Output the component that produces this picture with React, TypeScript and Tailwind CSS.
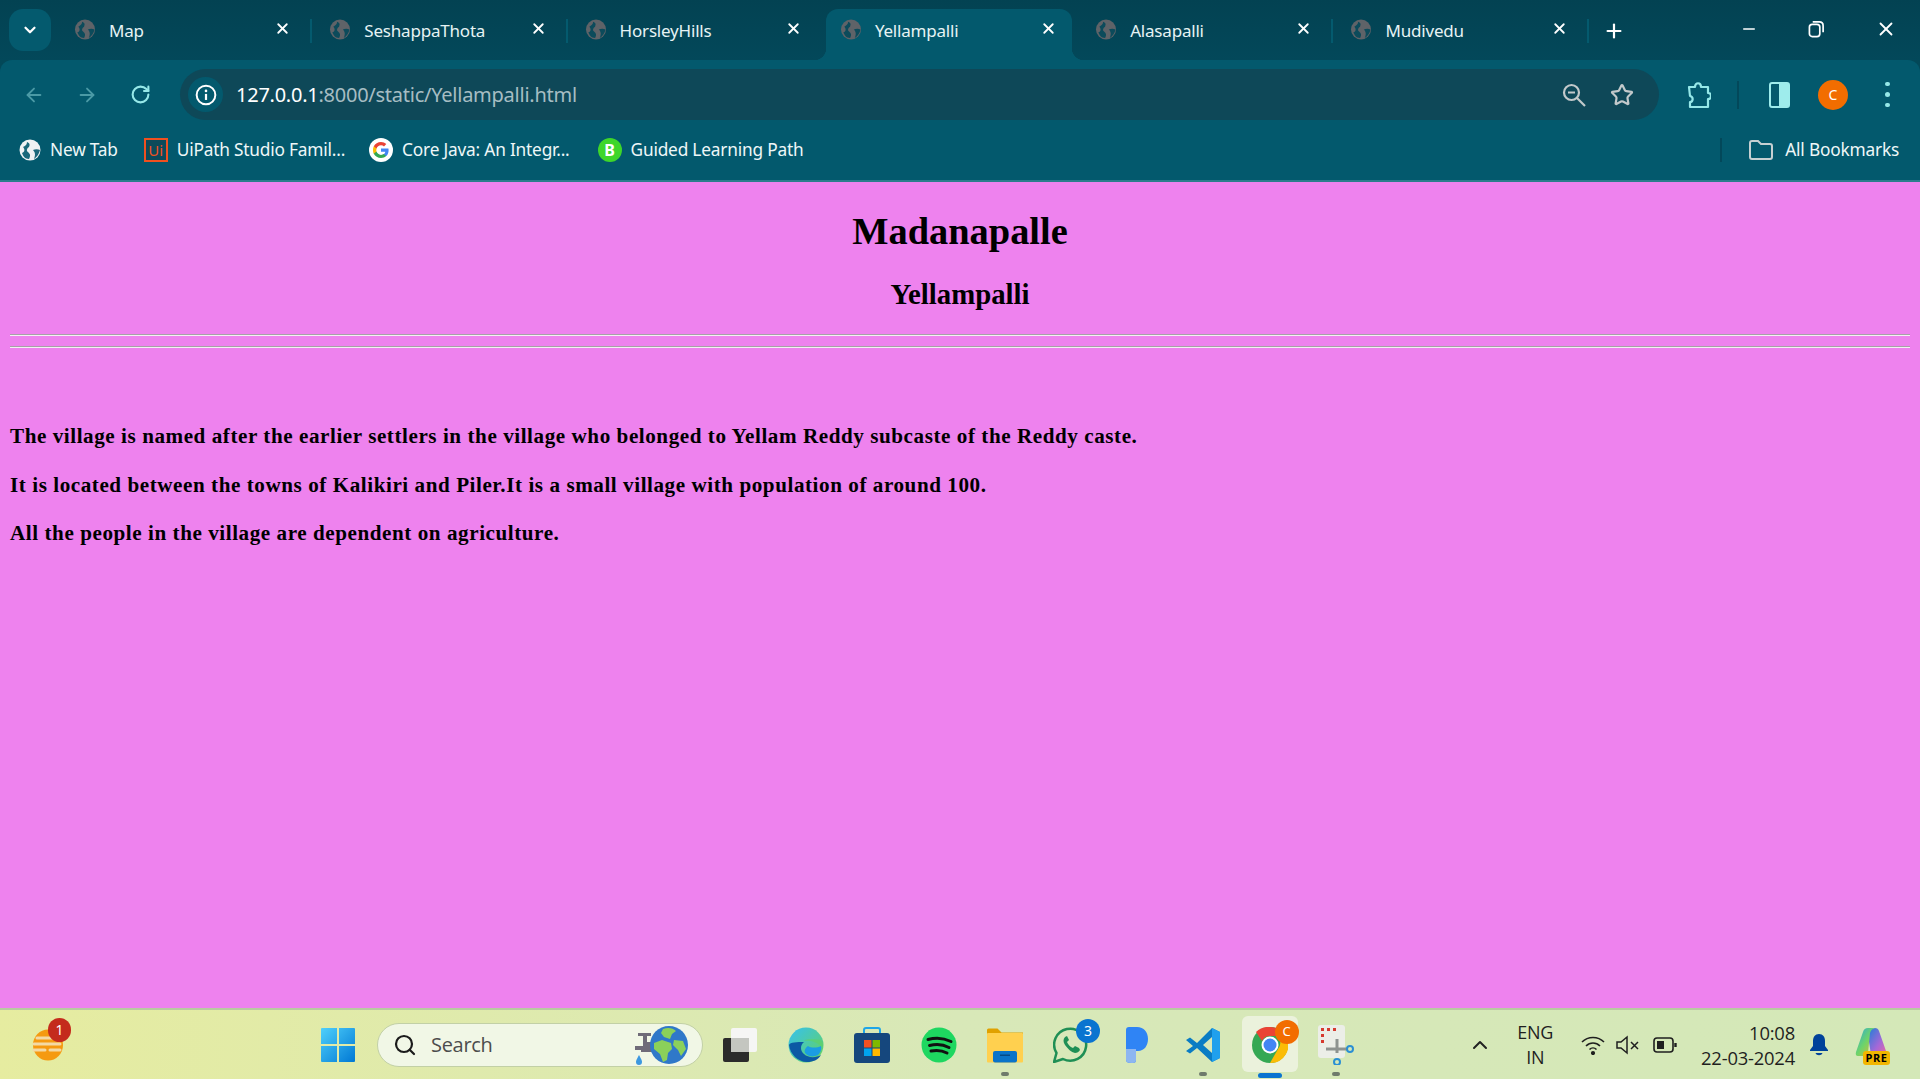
import React from 'react';
import { ChevronDown, X, Plus, ArrowLeft, ArrowRight, RotateCw, Minus, ChevronUp, Star, Search } from 'lucide-react';

const tabs = ['Map', 'SeshappaThota', 'HorsleyHills', 'Yellampalli', 'Alasapalli', 'Mudivedu'];

const Globe: React.FC<{ className?: string; fill?: string; cut?: string }> = ({ className = 'w-[22px] h-[21px]', fill = '#5f6368', cut = '#03485a' }) => (
  <svg viewBox="0 0 22 22" className={`shrink-0 ${className}`}>
    <circle cx="11" cy="11" r="10.5" fill={fill} />
    <path d="M3 14c3-1 3-4 1-6 2-1 4-2 4-5 3 1 3 3 2 5-2 1-3 4-1 5 2 2 3 3 1 7-4 0-6-3-7-6z" fill={cut} opacity="0.9" />
    <path d="M14 11c2-1 5-1 7 0-1 4-3 7-6 9 1-3 2-6-1-9z" fill={cut} opacity="0.9" />
  </svg>
);

const Tab: React.FC<{ title: string; active: boolean; hideSep: boolean }> = ({ title, active, hideSep }) => (
  <div className={`relative h-[51px] shrink-0 flex items-start pt-[10px] pl-[14px] rounded-t-[12px] ${active ? 'w-[246px] mr-[9.3px] pr-[15px] bg-[#03596d]' : 'w-[255.3px] pr-[24px]'}`}>
    <Globe />
    <span className="ml-[13px] flex-1 text-[17px] leading-[24px] text-[#e6f3f4] tracking-[-0.2px]">{title}</span>
    <X className="w-[17px] h-[17px] mt-[1px] text-white" strokeWidth={2.6} />
    {!active && !hideSep && <div className="absolute right-[3px] top-[10px] w-[2px] h-[24px] bg-[#045a6e]" />}
    {active && (
      <>
        <div className="absolute bottom-0 left-[-12px] w-[12px] h-[12px] bg-[radial-gradient(circle_at_0_0,transparent_12px,#03596d_12.5px)]" />
        <div className="absolute bottom-0 right-[-12px] w-[12px] h-[12px] bg-[radial-gradient(circle_at_100%_0,transparent_12px,#03596d_12.5px)]" />
      </>
    )}
  </div>
);

const BookmarkItem: React.FC<{ icon: React.ReactNode; label: string; className?: string }> = ({ icon, label, className = '' }) => (
  <div className={`flex items-center ${className}`}>
    {icon}
    <span className="ml-[9px] text-[17.3px] text-[#eef7f8] tracking-[-0.2px]">{label}</span>
  </div>
);

const GoogleG = () => (
  <svg viewBox="0 0 24 24" className="w-[24px] h-[24px]">
    <circle cx="12" cy="12" r="12" fill="#fff" />
    <path d="M19.6 12.2c0-.6-.1-1.1-.2-1.6H12v3.1h4.3c-.2 1-.8 1.9-1.6 2.4v2h2.6c1.5-1.4 2.3-3.4 2.3-5.900z" fill="#4285F4" />
    <path d="M12 20c2.2 0 4-.7 5.3-1.9l-2.600-2c-.7.5-1.600.8-2.700.8-2.100 0-3.900-1.400-4.500-3.300H4.800v2.100C6.100 18.200 8.800 20 12 20z" fill="#34A853" />
    <path d="M7.500 13.600c-.3-1-.3-2.100 0-3.200V8.300H4.800c-1.100 2.200-1.100 5.100 0 7.400z" fill="#FBBC05" />
    <path d="M12 7.200c1.200 0 2.200.4 3 1.200l2.300-2.300C15.900 4.800 14.100 4 12 4 8.800 4 6.100 5.800 4.800 8.300l2.700 2.100c.6-1.900 2.400-3.200 4.500-3.200z" fill="#EA4335" />
  </svg>
);

const Slot: React.FC<{ children: React.ReactNode; dot?: boolean }> = ({ children, dot }) => (
  <div className="relative w-[66.2px] h-[69px] shrink-0 flex items-center justify-center">
    {children}
    {dot && <div className="absolute bottom-[3px] left-1/2 -translate-x-1/2 w-[8px] h-[4px] rounded-full bg-[#6f7a6c]" />}
  </div>
);

const TaskView = () => (
  <svg viewBox="0 0 36 36" className="w-[36px] h-[36px]">
    <rect x="1" y="11" width="26" height="24" rx="2" fill="#2b2b2b" />
    <rect x="9" y="1" width="26" height="24" rx="2" fill="#f6f6f4" />
    <rect x="9" y="11" width="18" height="14" fill="#c4c6c0" />
  </svg>
);

const Edge = () => (
  <svg viewBox="0 0 36 36" className="w-[36px] h-[36px]">
    <defs>
      <linearGradient id="eg1" x1="0" y1="0" x2="1" y2="1"><stop offset="0" stopColor="#35c1f1" /><stop offset="1" stopColor="#66d35a" /></linearGradient>
    </defs>
    <circle cx="18" cy="18" r="17.500" fill="url(#eg1)" />
    <path d="M1 18C2 27 10 35 19 35c6 0 11-2 14-7-5 3-13 3-17-1-4-3-4-9 0-12-7 0-14 0-15 3z" fill="#0c59a4" />
    <path d="M20 19c3 2 9 2 13 0 1 4-1 7-3 9-4 2-9 2-12-1-2-2-2-5 2-8z" fill="#1b9de2" />
    <path d="M16 14c5-1 12 0 18 6 1 0 1-1 1-2 0-2-1-4-2-5-4 0-13-2-17 1z" fill="#5fd06a" opacity="0.7" />
  </svg>
);

const Store = () => (
  <svg viewBox="0 0 36 36" className="w-[36px] h-[36px]">
    <path d="M10 7V3q0-2 2-2h12q2 0 2 2v4" fill="none" stroke="#1ea6e8" strokeWidth="2" />
    <rect x="0" y="6" width="36" height="30" rx="3" fill="#15477d" />
    <rect x="10" y="13" width="7.500" height="7.500" fill="#f25022" />
    <rect x="18.500" y="13" width="7.500" height="7.500" fill="#7fba00" />
    <rect x="10" y="21.500" width="7.500" height="7.500" fill="#00a4ef" />
    <rect x="18.500" y="21.500" width="7.500" height="7.500" fill="#ffb900" />
  </svg>
);

const Spotify = () => (
  <svg viewBox="0 0 36 36" className="w-[36px] h-[36px]">
    <circle cx="18" cy="18" r="17.500" fill="#1ed760" />
    <path d="M7 12.500c7-2 16-1.500 23 2M8.500 18.500c6-1.500 14-1 19.500 2M10 24c5-1 11-.7 16 2" fill="none" stroke="#111" strokeWidth="3" strokeLinecap="round" />
  </svg>
);

const Folder = () => (
  <svg viewBox="0 0 36 36" className="w-[36px] h-[36px]">
    <path d="M0 3q0-1.500 1.500-1.500h9l4 4H36V12H0z" fill="#e0a100" />
    <rect x="0" y="6" width="36" height="29.500" rx="1" fill="#ffd04f" />
    <rect x="6" y="24" width="24" height="11.500" rx="2" fill="#0a74c9" />
    <rect x="13" y="27.500" width="10" height="1.500" fill="#064a86" />
  </svg>
);

const WhatsApp = () => (
  <svg viewBox="0 0 36 36" className="w-[36px] h-[36px]">
    <path d="M1 35l2.500-9A16 16 0 1 1 10 32z" fill="#d9e8b9" stroke="#1f8f55" strokeWidth="2.500" strokeLinejoin="round" />
    <path d="M12 10c-2 2-2 5 0 8 3 4 6 7 10 8 2 0 4-1 5-3l-1-2-4-2-2 2c-3-1-5-4-6-6l2-2-2-4z" fill="#1f8f55" />
  </svg>
);

const Pandora = () => (
  <svg viewBox="0 0 22 36" className="w-[22px] h-[36px]">
    <path d="M0 3q0-3 3-3h8c7 0 11 5 11 12s-4 12-10 12h-2v9q0 3-3 3H5q-5 0-5-3z" fill="#2f84f5" />
    <path d="M0 22h10v11q0 3-3 3H5q-5 0-5-3z" fill="#8db6f0" />
  </svg>
);

const VSCode = () => (
  <svg viewBox="0 0 36 36" className="w-[36px] h-[36px]">
    <path d="M27 1l8 4v26l-8 4-15-14-7 5.500-4-2.500 7-5-7-6 4-2.500 7 5.500z" fill="#0a7cc4" />
    <path d="M27 1l8 4v26l-8 4z" fill="#1fa0ed" />
    <path d="M27 10v16l-9-8z" fill="#d9e8b9" />
  </svg>
);

const Chrome = () => (
  <svg viewBox="0 0 36 36" className="w-[36px] h-[36px]">
    <circle cx="18" cy="18" r="18" fill="#34a853" />
    <path d="M18 0a18 18 0 0 1 16 9H18a9 9 0 0 0-8 5L4 5A18 18 0 0 1 18 0z" fill="#ea4335" />
    <path d="M34 9a18 18 0 0 1-16 27l8-14a9 9 0 0 0-1-13z" fill="#fbbc05" />
    <circle cx="18" cy="18" r="8.500" fill="#fff" />
    <circle cx="18" cy="18" r="6.500" fill="#4285f4" />
  </svg>
);

const Snip = () => (
  <svg viewBox="0 0 36 40" className="w-[36px] h-[40px]">
    <rect x="0" y="0" width="27" height="33" rx="3" fill="#eceee8" />
    <path d="M3 3h3v3H3zM9 3h3v3H9zM15 3h3v3h-3zM3 9h3v3H3zM3 15h3v3H3z" fill="#d63a2f" />
    <path d="M8 24h22M19 14v14" stroke="#8e9390" strokeWidth="3" />
    <circle cx="32" cy="24" r="3" fill="none" stroke="#2a8fd4" strokeWidth="2" />
    <circle cx="19" cy="37" r="3" fill="none" stroke="#2a8fd4" strokeWidth="2" />
  </svg>
);

const WinLogo = () => (
  <svg viewBox="0 0 36 36" className="w-[36px] h-[36px] shrink-0">
    <defs>
      <linearGradient id="w1" x1="0" y1="0" x2="1" y2="1"><stop offset="0" stopColor="#4fd0fb" /><stop offset="1" stopColor="#0078d4" /></linearGradient>
    </defs>
    <path d="M1 2q0-1 1-1h15v16H1zM19 1h15q1 0 1 1v15H19zM1 19h16v16H2q-1 0-1-1zM19 19h16v15q0 1-1 1H19z" fill="url(#w1)" />
  </svg>
);

const Weather = () => (
  <div className="relative w-[32px] h-[32px] shrink-0">
    <svg viewBox="0 0 32 32" className="w-[32px] h-[32px]">
      <ellipse cx="17" cy="16" rx="15" ry="15.500" fill="#f59a10" />
      <path d="M6 9h18M3 15h26M3 21h11M19 21h10" stroke="#f3d9a4" strokeWidth="3" strokeLinecap="round" />
    </svg>
    <span className="absolute -top-[11px] right-[-8px] w-[23px] h-[24px] rounded-full bg-[#c42b1c] text-white text-[14px] leading-[24px] text-center font-['Noto_Sans',sans-serif]">1</span>
  </div>
);

const TapGlobe = () => (
  <svg viewBox="0 0 56 42" className="w-[56px] h-[42px] shrink-0">
    <path d="M2 22h8V12H5V9h13v3h-4v6h6v10H8v-2H2z" fill="#6f6b78" />
    <path d="M6 31c-2 4-3 5-3 7a3 3 0 0 0 6 0c0-2-1-3-3-7z" fill="#3d98e0" />
    <circle cx="36" cy="21" r="19" fill="#2f78c9" />
    <path d="M30 5c5-2 10-1 13 2l-4 3-2 5-6-2-3-4zM21 19l8-3 9 3 1 6-4 4-1 7-4 2-3-8-6-5zM41 16l9 1 3 8-5 7-3-6-5-5z" fill="#8bd05a" />
  </svg>
);

const ProfileC = ({ className = '' }: { className?: string }) => (
  <div className={`rounded-full bg-[#f26d00] text-white flex items-center justify-center font-['Noto_Sans',sans-serif] ${className}`}>C</div>
);

export default function App() {
  return (
    <div className="w-full h-[1079px] flex flex-col overflow-hidden font-['Noto_Sans',sans-serif] bg-[#034858]">
      {/* tab strip */}
      <div className="h-[60px] shrink-0 bg-gradient-to-b from-[#034252] to-[#03485a] flex items-start pt-[9px]">
        <div className="ml-[9px] w-[42px] h-[42px] rounded-[14px] bg-[#045a6e] flex items-center justify-center shrink-0">
          <ChevronDown className="w-[18px] h-[18px] text-white" strokeWidth={3} />
        </div>
        <div className="ml-[9px] flex">
          {tabs.map((t, i) => (
            <Tab key={t} title={t} active={i === 3} hideSep={i === 2} />
          ))}
        </div>
        <Plus className="ml-[11px] mt-[11px] w-[22px] h-[22px] text-white shrink-0" strokeWidth={2.4} />
        <div className="ml-auto flex items-center mt-[9px] shrink-0">
          <Minus className="w-[18px] h-[18px] text-white" strokeWidth={2} />
          <svg viewBox="0 0 18 18" className="ml-[50px] w-[17px] h-[18px]" fill="none" stroke="#fff" strokeWidth="1.800">
            <rect x="1.500" y="4" width="11" height="13" rx="3" />
            <path d="M5 1.500h7q4 0 4 4v7" />
          </svg>
          <X className="ml-[50px] mr-[23px] w-[22px] h-[22px] text-white" strokeWidth={2} />
        </div>
      </div>

      {/* toolbar */}
      <div className="h-[60px] shrink-0 bg-[#03596d] rounded-t-[12px] flex items-center pt-[9px]">
        <ArrowLeft className="ml-[23px] w-[22px] h-[22px] text-[#4b9aa6]" strokeWidth={2} />
        <ArrowRight className="ml-[31px] w-[22px] h-[22px] text-[#4b9aa6]" strokeWidth={2} />
        <RotateCw className="ml-[32px] w-[21px] h-[21px] text-[#96e8e8]" strokeWidth={2.400} />
        <div className="ml-[29px] w-[1479px] h-[51px] rounded-full bg-[#0e4858] flex items-center pl-[8px] shrink-0">
          <div className="w-[35px] h-[35px] rounded-full bg-[#03596d] flex items-center justify-center">
            <svg viewBox="0 0 20 20" className="w-[22px] h-[22px]" fill="none">
              <circle cx="10" cy="10" r="8.500" stroke="#fff" strokeWidth="1.800" />
              <path d="M10 9v5.500" stroke="#fff" strokeWidth="2" />
              <circle cx="10" cy="6.300" r="1.200" fill="#fff" />
            </svg>
          </div>
          <span className="ml-[13px] text-[20px] tracking-[-0.25px] text-white">127.0.0.1<span className="text-[#a6bdc3]">:8000/static/Yellampalli.html</span></span>
          <svg viewBox="0 0 24 24" className="ml-auto w-[24px] h-[24px]" fill="none" stroke="#c2c9cb" strokeWidth="2.200">
            <circle cx="9.500" cy="9.500" r="7.500" />
            <path d="M6 9.500h7M15 15l8 8" />
          </svg>
          <Star className="ml-[24px] mr-[25px] w-[24px] h-[24px] text-[#c2c9cb]" strokeWidth={2.200} />
        </div>
        <svg viewBox="0 0 24 28" className="ml-[28px] w-[24px] h-[28px]" fill="none" stroke="#96e8e8" strokeWidth="2.200" strokeLinejoin="round">
          <path d="M2 6h6c0-5 6-5 6 0h7v6c4 0 4 6 0 6v8H3v-5c3 0 4-5 0-6z" />
        </svg>
        <div className="ml-[26px] w-[2px] h-[28px] bg-[#03485a]" />
        <div className="ml-[30px] w-[21px] h-[26px] rounded-[3px] border-[2px] border-[#9eecec] flex justify-end">
          <div className="w-[9px] h-full bg-[#9eecec]" />
        </div>
        <ProfileC className="ml-[28px] w-[30px] h-[30px] text-[14px]" />
        <div className="ml-[37px] flex flex-col gap-[6px]">
          <div className="w-[4.5px] h-[4.5px] rounded-full bg-[#96e8e8]" />
          <div className="w-[4.5px] h-[4.5px] rounded-full bg-[#96e8e8]" />
          <div className="w-[4.5px] h-[4.5px] rounded-full bg-[#96e8e8]" />
        </div>
      </div>

      {/* bookmarks */}
      <div className="h-[60px] shrink-0 bg-[#03596d] flex items-center">
        <BookmarkItem className="ml-[19px]" icon={<Globe className="w-[22px] h-[22px]" fill="#f0f2f3" cut="#03596d" />} label="New Tab" />
        <BookmarkItem className="ml-[26px]" icon={
          <div className="w-[24px] h-[24px] border-[2px] border-[#f0501f] bg-[#0c4a5a] flex items-center justify-center text-[#f0501f] text-[15px] leading-none">Ui</div>
        } label="UiPath Studio Famil..." />
        <BookmarkItem className="ml-[24px]" icon={<GoogleG />} label="Core Java: An Integr..." />
        <BookmarkItem className="ml-[28px]" icon={
          <div className="w-[24px] h-[24px] rounded-full bg-[#3ed62a] text-white font-bold text-[16px] leading-[24px] text-center">B</div>
        } label="Guided Learning Path" />
        <div className="ml-auto w-[2px] h-[24px] bg-[#03485a]" />
        <svg viewBox="0 0 24 20" className="ml-[27px] w-[24px] h-[20px]" fill="none" stroke="#c6d0d2" strokeWidth="2">
          <path d="M1 3q0-2 2-2h6l3 3h9q2 0 2 2v11q0 2-2 2H3q-2 0-2-2z" />
        </svg>
        <span className="ml-[12px] mr-[21px] text-[17.3px] text-[#eef7f8] tracking-[-0.2px]">All Bookmarks</span>
      </div>
      <div className="h-[2px] shrink-0 bg-[#2a7d8c]" />

      {/* page */}
      <main className="flex-1 min-h-0 px-[10px] bg-[#ee82ee] text-black font-['Liberation_Serif',serif] font-bold">
        <h1 className="text-[38.4px] leading-[46px] text-center pt-[26px]">Madanapalle</h1>
        <h2 className="text-[28.8px] leading-[34px] text-center mt-[23px]">Yellampalli</h2>
        <hr className="mt-[22.5px] border-0 h-[2.500px] border-t border-t-[#a8a0a8] bg-[#f4f0f4]" />
        <hr className="mt-[9.5px] border-0 h-[2.500px] border-t border-t-[#a8a0a8] bg-[#f4f0f4]" />
        <p className="mt-[76px] text-[21.12px] leading-[24px] tracking-[0.56px]">The village is named after the earlier settlers in the village who belonged to Yellam Reddy subcaste of the Reddy caste.</p>
        <p className="mt-[24.500px] text-[21.12px] leading-[24px] tracking-[0.56px]">It is located between the towns of Kalikiri and Piler.It is a small village with population of around 100.</p>
        <p className="mt-[24.500px] text-[21.12px] leading-[24px] tracking-[0.56px]">All the people in the village are dependent on agriculture.</p>
      </main>

      {/* taskbar */}
      <footer className="h-[71px] shrink-0 border-t-[2px] border-t-[#b9cba0] bg-gradient-to-r from-[#e6eca0] via-[#d8e8b8] to-[#d4e8b8] flex items-center">
        <div className="ml-[31px]"><Weather /></div>
        <div className="ml-[257px]"><WinLogo /></div>
        <div className="ml-[21px] w-[326px] h-[44px] rounded-full bg-[#f1f7e6] border border-[#c2d0a6] flex items-center pl-[15px] pr-[13px] shrink-0">
          <Search className="w-[24px] h-[24px] text-[#1b1b1b]" strokeWidth={2.200} />
          <span className="ml-[14px] text-[20px] text-[#4c4c4c] font-['Open_Sans',sans-serif] tracking-[-0.300px]">Search</span>
          <div className="ml-auto"><TapGlobe /></div>
        </div>
        <div className="ml-[4px] flex">
          <Slot><TaskView /></Slot>
          <Slot><Edge /></Slot>
          <Slot><Store /></Slot>
          <Slot><Spotify /></Slot>
          <Slot dot><Folder /></Slot>
          <Slot>
            <WhatsApp />
            <span className="absolute top-[9px] left-[38px] w-[24px] h-[24px] rounded-full bg-[#0a74d0] text-white text-[14px] leading-[24px] text-center">3</span>
          </Slot>
          <Slot><Pandora /></Slot>
          <Slot dot><VSCode /></Slot>
          <Slot>
            <div className="absolute left-[5px] top-[6px] w-[56px] h-[56px] rounded-[6px] bg-[#ebf2dc]" />
            <div className="relative"><Chrome /></div>
            <ProfileC className="absolute top-[10px] left-[38px] w-[24px] h-[24px] text-[13px]" />
            <div className="absolute bottom-[1px] left-1/2 -translate-x-1/2 w-[24px] h-[5px] rounded-full bg-[#0a74d0]" />
          </Slot>
          <Slot dot><Snip /></Slot>
        </div>
        <div className="ml-auto flex items-center font-['Open_Sans',sans-serif] text-[#1f1f1f] shrink-0">
          <ChevronUp className="w-[24px] h-[24px] text-[#222]" strokeWidth={2} />
          <div className="ml-[25px] text-center text-[18px] leading-[25px] tracking-[-0.300px]">ENG<br />IN</div>
          <svg viewBox="0 0 24 20" className="ml-[28px] w-[24px] h-[20px]" fill="none" stroke="#1f1f1f" strokeWidth="1.600">
            <path d="M1 7c6-6 16-6 22 0M5 11c4-4 10-4 14 0M8.500 14.500c2-2 5-2 7 0" />
            <circle cx="12" cy="18" r="1.300" fill="#1f1f1f" />
          </svg>
          <svg viewBox="0 0 24 20" className="ml-[11px] w-[24px] h-[20px]" fill="none" stroke="#1f1f1f" strokeWidth="1.500">
            <path d="M1 7h4l6-5v16l-6-5H1zM15 7l7 7M22 7l-7 7" />
          </svg>
          <svg viewBox="0 0 24 16" className="ml-[13px] w-[24px] h-[16px]" fill="none" stroke="#1f1f1f" strokeWidth="1.600">
            <rect x="1" y="1" width="19" height="14" rx="3" />
            <rect x="4" y="4" width="7" height="8" fill="#1f1f1f" stroke="none" />
            <path d="M22.500 6v4" strokeWidth="2.400" />
          </svg>
          <div className="ml-[24px] text-right text-[18.4px] leading-[25px] tracking-[-0.200px]">10:08<br />22-03-2024</div>
          <svg viewBox="0 0 20 24" className="ml-[14px] w-[20px] h-[24px]">
            <path d="M10 1c-4 0-6 3-6 7v5l-3 4v1h18v-1l-3-4V8c0-4-2-7-6-7zM6.500 20h7c-1 3-6 3-7 0z" fill="#00429a" />
          </svg>
          <div className="relative ml-[26px] mr-[31px] w-[34px] h-[36px]">
            <svg viewBox="0 0 34 30" className="w-[34px] h-[30px]">
              <defs>
                <linearGradient id="cp1" x1="0" y1="0" x2="1" y2="1"><stop offset="0" stopColor="#26a6e0" /><stop offset="0.5" stopColor="#6dd46a" /><stop offset="1" stopColor="#e8b530" /></linearGradient>
                <linearGradient id="cp2" x1="0" y1="0" x2="1" y2="1"><stop offset="0" stopColor="#1d7fd8" /><stop offset="0.6" stopColor="#a468d8" /><stop offset="1" stopColor="#e86aa0" /></linearGradient>
              </defs>
              <path d="M20 1q3 0 4 3l7 20q1 4-3 4H16L13 8q0-7 7-7z" fill="url(#cp2)" />
              <path d="M8 5q1-4 5-4h7q-4 1-5 5L13 26q-1 3-4 3H3Q0 29 1 25z" fill="url(#cp1)" />
            </svg>
            <span className="absolute bottom-[-2px] right-[-1px] h-[14px] w-[27px] rounded-[3px] bg-[#f2b600] text-black text-[11px] leading-[14px] font-bold text-center tracking-[0.5px]">PRE</span>
          </div>
        </div>
      </footer>
    </div>
  );
}
